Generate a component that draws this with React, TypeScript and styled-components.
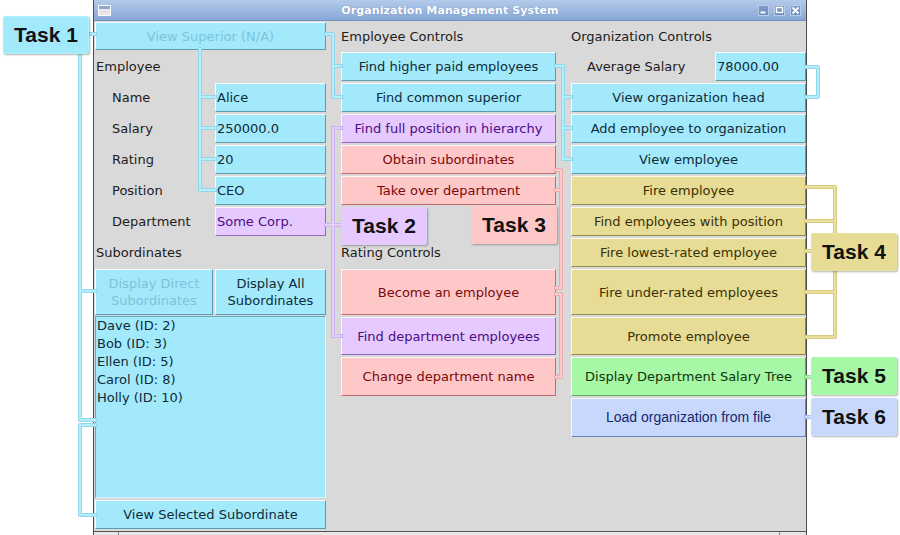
import React from "react";
import styled, { createGlobalStyle } from "styled-components";

const GlobalStyle = createGlobalStyle`
  html, body { margin: 0; padding: 0; background: #ffffff; }
  body { font-family: "DejaVu Sans", "Liberation Sans", sans-serif; }
`;

type Tone = "cyan" | "pink" | "purple" | "yellow" | "green" | "blue";

const tones: Record<
  Tone,
  { bg: string; hi: string; lo: string; fg: string; line: string; lineHi: string }
> = {
  cyan: { bg: "#a3e9fc", hi: "#f4fdff", lo: "#5a9db0", fg: "#0e2c38", line: "#93d6ea", lineHi: "#b2eefc" },
  pink: { bg: "#ffc8c8", hi: "#fff4f4", lo: "#c46a6a", fg: "#7a0a0a", line: "#eeabab", lineHi: "#fccaca" },
  purple: { bg: "#e6c9fe", hi: "#fbf4ff", lo: "#9266c4", fg: "#4a0e82", line: "#cdb0ee", lineHi: "#e6cefc" },
  yellow: { bg: "#e6dc96", hi: "#fbf8e4", lo: "#958945", fg: "#3a3004", line: "#d6ca7e", lineHi: "#e9df9e" },
  green: { bg: "#a6f7a6", hi: "#f0fff0", lo: "#5eb05e", fg: "#0c360c", line: "#8ed88e", lineHi: "#b0f4b0" },
  blue: { bg: "#c8d8fc", hi: "#f4f8ff", lo: "#6c86c2", fg: "#14286e", line: "#a8bce8", lineHi: "#cddcfc" },
};

const Page = styled.div`
  position: relative;
  width: 900px;
  height: 535px;
  overflow: hidden;
  background: #ffffff;
`;

const Window = styled.div`
  margin-left: 93px;
  width: 714px;
  height: 536px;
  box-sizing: border-box;
  border-left: 1px solid #4c4c4c;
  border-right: 1px solid #4c4c4c;
  background: #d9d9d9;
  display: flex;
  flex-direction: column;
`;

const TitleBar = styled.div`
  height: 21px;
  box-sizing: border-box;
  border-bottom: 1px solid #7392c2;
  background: linear-gradient(#b3cbea, #88a7d7);
  display: grid;
  grid-template-columns: 1fr auto 1fr;
  align-items: center;
`;

const TitleIcon = styled.svg`
  margin-left: 4px;
  display: block;
`;

const TitleText = styled.div`
  font-family: "DejaVu Sans", sans-serif;
  font-weight: bold;
  font-size: 11px;
  color: #ffffff;
  text-shadow: 0 0 1px #5d7cae;
  letter-spacing: 0.1px;
`;

const TitleButtons = styled.div`
  justify-self: end;
  display: flex;
  gap: 5px;
  margin-right: 5px;
`;

const TitleButton = styled.div`
  width: 11px;
  height: 11px;
  box-sizing: border-box;
  border: 1px solid #b7cbe9;
  background: linear-gradient(#7f9dcb, #6a8bbf);
  display: flex;
  align-items: center;
  justify-content: center;
`;

const Grid = styled.div`
  display: grid;
  grid-template-columns: 120px 111px 15px 215px 15px 144px 91px;
  grid-template-rows: 28px repeat(7, 29px) 46px 38px 39px 39px 59px 29px;
  row-gap: 2px;
  padding: 1px 0 2px 1px;
  font-size: 13px;
`;

type Place = { $col?: string; $row?: string };

const Label = styled.div<Place & { $indent?: number }>`
  grid-column: ${(p) => p.$col ?? "auto"};
  grid-row: ${(p) => p.$row ?? "auto"};
  display: flex;
  align-items: center;
  padding-left: ${(p) => p.$indent ?? 0}px;
  color: #1c1c1c;
  white-space: nowrap;
`;

const Btn = styled.button<Place & { $tone: Tone; $disabled?: boolean }>`
  grid-column: ${(p) => p.$col ?? "auto"};
  grid-row: ${(p) => p.$row ?? "auto"};
  margin: 0;
  padding: 0;
  font-family: inherit;
  font-size: 13px;
  line-height: 17px;
  display: flex;
  align-items: center;
  justify-content: center;
  text-align: center;
  box-sizing: border-box;
  background: ${(p) => tones[p.$tone].bg};
  border-style: solid;
  border-width: 1px;
  border-color: ${(p) => `${tones[p.$tone].hi} ${tones[p.$tone].lo} ${tones[p.$tone].lo} ${tones[p.$tone].hi}`};
  color: ${(p) => (p.$disabled ? "#7cc3da" : tones[p.$tone].fg)};
  white-space: nowrap;
`;

const WideBtn = styled(Btn)`
  font-family: "Liberation Sans", Arial, sans-serif;
  font-size: 14px;
`;

const Field = styled.div<Place & { $tone: Tone }>`
  grid-column: ${(p) => p.$col ?? "auto"};
  grid-row: ${(p) => p.$row ?? "auto"};
  display: flex;
  align-items: center;
  padding-left: 1px;
  box-sizing: border-box;
  background: ${(p) => tones[p.$tone].bg};
  border-style: solid;
  border-width: 1px;
  border-color: ${(p) => `${tones[p.$tone].hi} ${tones[p.$tone].lo} ${tones[p.$tone].lo} ${tones[p.$tone].hi}`};
  color: ${(p) => tones[p.$tone].fg};
`;

const ButtonPair = styled.div`
  grid-column: 1 / span 2;
  grid-row: 9;
  display: grid;
  grid-template-columns: 118px 1fr;
  column-gap: 2px;
`;

const SubList = styled.ul`
  grid-column: 1 / span 2;
  grid-row: 10 / span 4;
  margin: -1px 0 0 0;
  padding: 0 1px;
  list-style: none;
  box-sizing: border-box;
  background: #a3e9fc;
  border-style: solid;
  border-width: 1px;
  border-color: #6aa7b9 #e4f9ff #c8f3ff #6aa7b9;
  color: #0e2c38;
`;

const SubItem = styled.li`
  height: 18px;
  line-height: 18px;
`;

const BottomBar = styled.div`
  height: 5px;
  box-sizing: border-box;
  border-top: 1px solid #555555;
  background: #e6e6e6;
  display: grid;
  grid-template-columns: 25px 1fr 26px;
`;

const BarCell = styled.div`
  border-right: 1px solid #8a8a8a;
  &:last-child { border-right: none; }
`;

const Overlay = styled.svg`
  position: absolute;
  left: 0;
  top: 0;
  pointer-events: none;
`;

const TaskTag = styled.div<{ $tone: Tone; $x: number; $y: number }>`
  position: absolute;
  left: ${(p) => p.$x}px;
  top: ${(p) => p.$y}px;
  width: 86px;
  height: 38px;
  box-sizing: border-box;
  display: flex;
  align-items: center;
  justify-content: center;
  background: ${(p) => tones[p.$tone].bg};
  border: 1px solid ${(p) => tones[p.$tone].lineHi};
  border-radius: 2px;
  box-shadow: 1px 1px 2px rgba(0, 0, 0, 0.3);
  font-family: "Liberation Sans", Arial, sans-serif;
  font-weight: bold;
  font-size: 21px;
  color: #121212;
`;

const connectors: { tone: Tone; d: string }[] = [
  { tone: "cyan", d: "M89,34 H95 M80,54 V420 H95 M80,291 H95 M95,425 H80 V515 H95" },
  { tone: "cyan", d: "M200,49 V190 H215 M200,97 H215 M200,128 H215 M200,159 H215" },
  { tone: "cyan", d: "M326,34 H333 V97 H341 M333,66 H341" },
  { tone: "cyan", d: "M556,66 H563 V159 H571 M563,97 H571 M563,128 H571" },
  { tone: "cyan", d: "M806,67 H818 V97 H806" },
  { tone: "purple", d: "M341,128 H333 V336 H341 M326,225 H342" },
  { tone: "pink", d: "M556,170 H561 V288 H556 M556,190 H561 M556,294 H561 V377 H556" },
  { tone: "yellow", d: "M806,187 H835 V233 M806,221 H835 M806,251 H811 M835,270 V337 H806 M806,292 H835" },
  { tone: "green", d: "M806,377 H811" },
  { tone: "blue", d: "M806,417 H811" },
];

const subordinates = [
  "Dave (ID: 2)",
  "Bob (ID: 3)",
  "Ellen (ID: 5)",
  "Carol (ID: 8)",
  "Holly (ID: 10)",
];

const employeeFields: { label: string; value: string; tone: Tone }[] = [
  { label: "Name", value: "Alice", tone: "cyan" },
  { label: "Salary", value: "250000.0", tone: "cyan" },
  { label: "Rating", value: "20", tone: "cyan" },
  { label: "Position", value: "CEO", tone: "cyan" },
  { label: "Department", value: "Some Corp.", tone: "purple" },
];

const employeeControls: { text: string; tone: Tone }[] = [
  { text: "Find higher paid employees", tone: "cyan" },
  { text: "Find common superior", tone: "cyan" },
  { text: "Find full position in hierarchy", tone: "purple" },
  { text: "Obtain subordinates", tone: "pink" },
  { text: "Take over department", tone: "pink" },
];

const ratingControls: { text: string; tone: Tone }[] = [
  { text: "Become an employee", tone: "pink" },
  { text: "Find department employees", tone: "purple" },
  { text: "Change department name", tone: "pink" },
];

const orgControls: { text: string; tone: Tone }[] = [
  { text: "View organization head", tone: "cyan" },
  { text: "Add employee to organization", tone: "cyan" },
  { text: "View employee", tone: "cyan" },
  { text: "Fire employee", tone: "yellow" },
  { text: "Find employees with position", tone: "yellow" },
  { text: "Fire lowest-rated employee", tone: "yellow" },
  { text: "Fire under-rated employees", tone: "yellow" },
  { text: "Promote employee", tone: "yellow" },
  { text: "Display Department Salary Tree", tone: "green" },
];

const tags: { text: string; tone: Tone; x: number; y: number }[] = [
  { text: "Task 1", tone: "cyan", x: 3, y: 16 },
  { text: "Task 2", tone: "purple", x: 341, y: 207 },
  { text: "Task 3", tone: "pink", x: 471, y: 206 },
  { text: "Task 4", tone: "yellow", x: 811, y: 233 },
  { text: "Task 5", tone: "green", x: 811, y: 357 },
  { text: "Task 6", tone: "blue", x: 811, y: 398 },
];

export default function App() {
  return (
    <Page>
      <GlobalStyle />
      <Window>
        <TitleBar>
          <TitleIcon width="13" height="11" viewBox="0 0 13 11">
            <rect x="0.5" y="0.5" width="12" height="10" fill="#e9e4ea" stroke="#f6f8fc" />
            <rect x="1" y="1" width="11" height="3" fill="#8ea6cc" />
            <rect x="1" y="4" width="11" height="6" fill="#efe6e8" />
            <line x1="1" y1="7" x2="12" y2="7" stroke="#e2d6da" />
          </TitleIcon>
          <TitleText>Organization Management System</TitleText>
          <TitleButtons>
            <TitleButton>
              <svg width="9" height="9" viewBox="0 0 9 9">
                <rect x="1.5" y="5.5" width="5" height="2" fill="#ffffff" />
              </svg>
            </TitleButton>
            <TitleButton>
              <svg width="9" height="9" viewBox="0 0 9 9">
                <rect x="1.5" y="1.5" width="6" height="5" fill="none" stroke="#ffffff" strokeWidth="1.4" />
              </svg>
            </TitleButton>
            <TitleButton>
              <svg width="9" height="9" viewBox="0 0 9 9">
                <path d="M1.5,1.5 L7.5,7.5 M7.5,1.5 L1.5,7.5" stroke="#ffffff" strokeWidth="1.8" />
              </svg>
            </TitleButton>
          </TitleButtons>
        </TitleBar>

        <Grid>
          <Btn $tone="cyan" $col="1 / span 2" $row="1" $disabled>
            View Superior (N/A)
          </Btn>
          <Label $col="1" $row="2" $indent={1}>Employee</Label>
          {employeeFields.map((f, i) => (
            <React.Fragment key={f.label}>
              <Label $col="1" $row={String(i + 3)} $indent={17}>
                {f.label}
              </Label>
              <Field $col="2" $row={String(i + 3)} $tone={f.tone}>
                {f.value}
              </Field>
            </React.Fragment>
          ))}
          <Label $col="1" $row="8" $indent={1}>Subordinates</Label>
          <ButtonPair>
            <Btn $tone="cyan" $disabled>
              Display Direct
              <br />
              Subordinates
            </Btn>
            <Btn $tone="cyan">
              Display All
              <br />
              Subordinates
            </Btn>
          </ButtonPair>
          <SubList>
            {subordinates.map((s) => (
              <SubItem key={s}>{s}</SubItem>
            ))}
          </SubList>
          <Btn $tone="cyan" $col="1 / span 2" $row="14">
            View Selected Subordinate
          </Btn>

          <Label $col="4" $row="1">Employee Controls</Label>
          {employeeControls.map((b, i) => (
            <Btn key={b.text} $tone={b.tone} $col="4" $row={String(i + 2)}>
              {b.text}
            </Btn>
          ))}
          <Label $col="4" $row="8">Rating Controls</Label>
          {ratingControls.map((b, i) => (
            <Btn key={b.text} $tone={b.tone} $col="4" $row={String(i + 9)}>
              {b.text}
            </Btn>
          ))}

          <Label $col="6 / span 2" $row="1">Organization Controls</Label>
          <Label $col="6" $row="2" $indent={16}>Average Salary</Label>
          <Field $col="7" $row="2" $tone="cyan">78000.00</Field>
          {orgControls.map((b, i) => (
            <Btn key={b.text} $tone={b.tone} $col="6 / span 2" $row={String(i + 3)}>
              {b.text}
            </Btn>
          ))}
          <WideBtn $tone="blue" $col="6 / span 2" $row="12">
            Load organization from file
          </WideBtn>
        </Grid>

        <BottomBar>
          <BarCell />
          <BarCell />
          <BarCell />
        </BottomBar>
      </Window>

      <Overlay width="900" height="535" viewBox="0 0 900 535">
        {connectors.map((c, i) => (
          <g key={i} fill="none" strokeLinejoin="round" strokeLinecap="square">
            <path d={c.d} stroke={tones[c.tone].line} strokeWidth="4" />
            <path d={c.d} stroke={tones[c.tone].lineHi} strokeWidth="2" />
          </g>
        ))}
      </Overlay>

      {tags.map((t) => (
        <TaskTag key={t.text} $tone={t.tone} $x={t.x} $y={t.y}>
          {t.text}
        </TaskTag>
      ))}
    </Page>
  );
}
